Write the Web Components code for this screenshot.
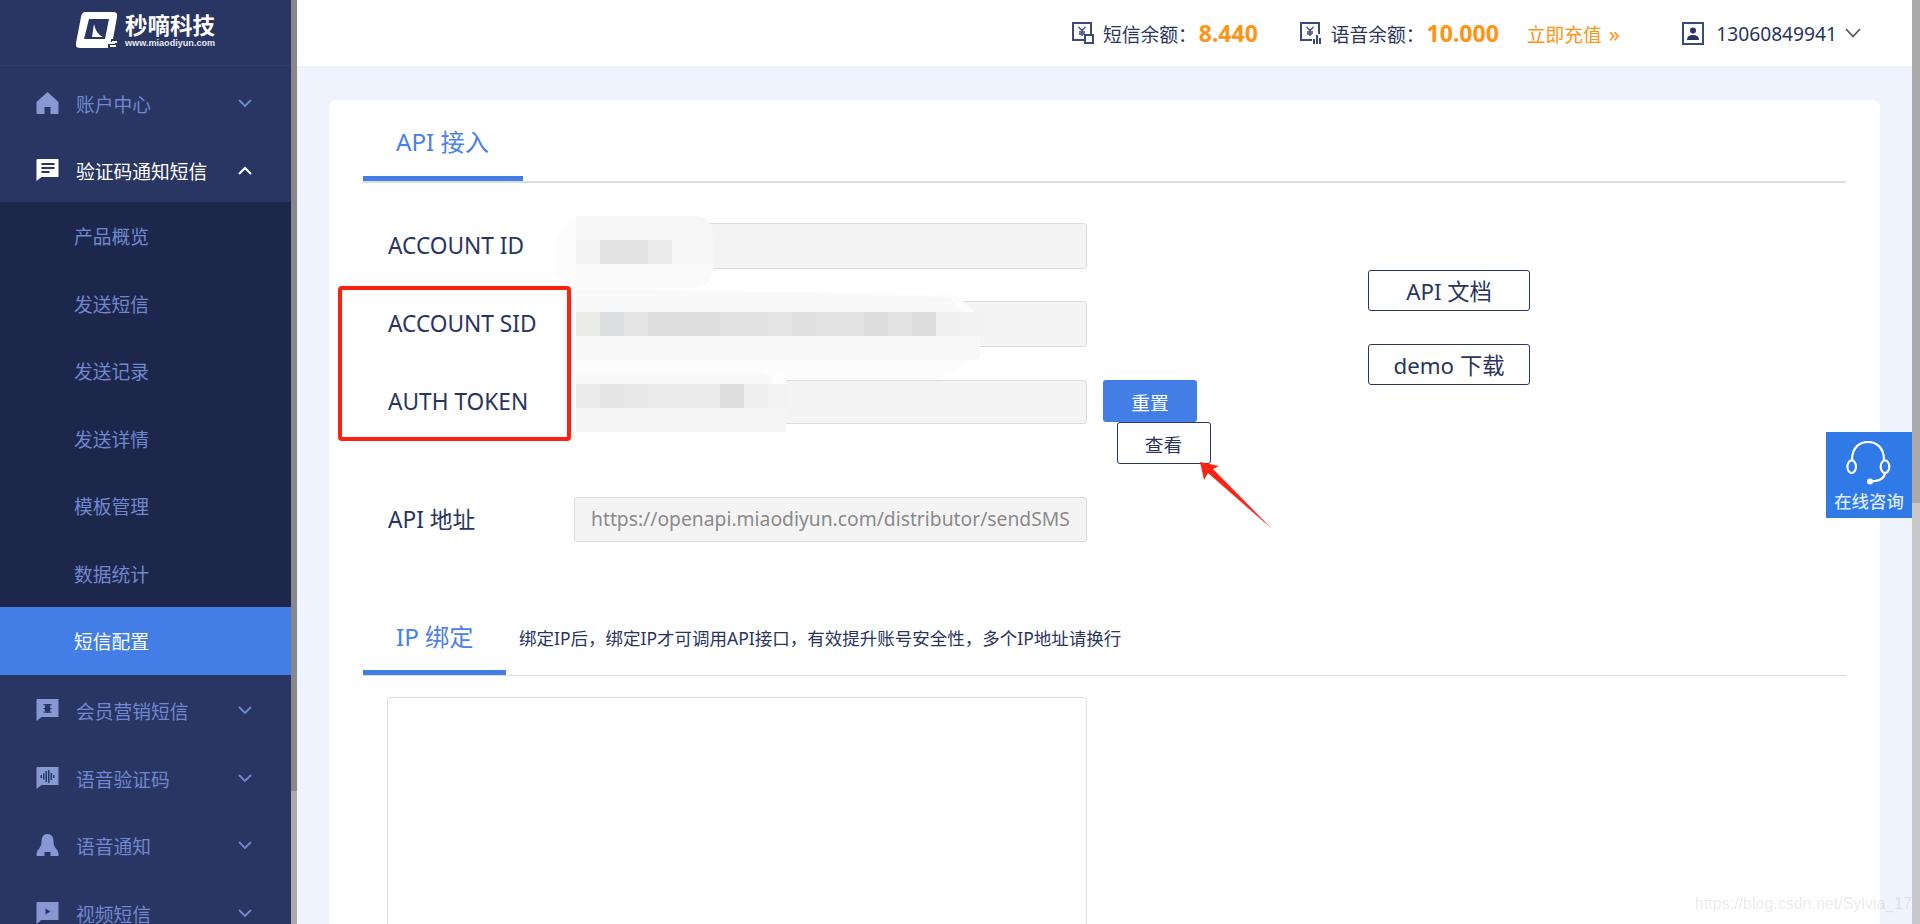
<!DOCTYPE html>
<html lang="zh-CN"><head><meta charset="utf-8"><title>API 接入</title>
<style>
html,body{margin:0;padding:0;height:924px;overflow:hidden;background:#eff3fe}
body{font-family:"Noto Sans","Noto Sans CJK SC",sans-serif;color:#29355f}
</style></head>
<body>
<app-shell>
  <side-bar slot="side">
    <nav-item icon="home" label="账户中心"></nav-item>
    <nav-item icon="chat" label="验证码通知短信" open></nav-item>
    <nav-sub>产品概览</nav-sub><nav-sub>发送短信</nav-sub><nav-sub>发送记录</nav-sub><nav-sub>发送详情</nav-sub><nav-sub>模板管理</nav-sub><nav-sub>数据统计</nav-sub><nav-sub active>短信配置</nav-sub>
    <nav-item icon="bug" label="会员营销短信"></nav-item>
    <nav-item icon="wave" label="语音验证码"></nav-item>
    <nav-item icon="bell" label="语音通知"></nav-item>
    <nav-item icon="play" label="视频短信"></nav-item>
  </side-bar>
  <top-bar slot="top"></top-bar>
  <api-card slot="main"></api-card>
</app-shell>
<redaction-layer></redaction-layer>
<consult-float></consult-float>
<script>
function el(name,html){
  customElements.define(name,class extends HTMLElement{
    constructor(){super();this.attachShadow({mode:'open'}).innerHTML=typeof html==='function'?html(this):html;}
  });
}
el('app-shell',`<style>
:host{display:grid;grid-template-columns:297px 1fr 8px;grid-template-rows:66px 1fr;width:1920px;height:924px;overflow:hidden}
.side{grid-row:1/3;grid-column:1;min-height:0}
.top{grid-column:2;grid-row:1}
.main{grid-column:2;grid-row:2;padding:34px 32px 0;min-height:0;overflow:hidden;background:#eff3fe}
.sb{grid-column:3;grid-row:1/3;display:grid;grid-template-rows:503px 1fr}
.sb i{display:block;background:#aaaaaa}.sb i+i{background:#c8c8c8}
</style>
<div class="side"><slot name="side"></slot></div>
<div class="top"><slot name="top"></slot></div>
<div class="main"><slot name="main"></slot></div>
<div class="sb"><i></i><i></i></div>`);

const logo=`<svg width="42" height="38" viewBox="0 0 42 38" aria-hidden="true">
<path fill="#fff" d="M9 0H37Q42 0 41 5L37 27H35V30H39V32H32V36H4Q-1 36 0 31L5 5Q6 0 9 0Z"/>
<path fill="#293663" d="M13 7H33L29 27H8Z"/>
<path fill="#fff" d="M18 12L16 25H27Q20 22 18 12Z"/>
<rect x="34" y="33" width="6" height="2" fill="#fff"/><rect x="33" y="29.500" width="2" height="2" fill="#fff"/><rect x="36" y="29" width="5" height="2" fill="#fff"/></svg>`;
el('side-bar',`<style>
:host{display:grid;grid-template-columns:291px 6px;height:924px;overflow:hidden;background:#293663}
.col{display:flex;flex-direction:column;overflow:hidden;height:924px}
.brand{flex:0 0 66px;box-sizing:border-box;border-bottom:1px solid #2f3f76;display:flex;align-items:flex-start;padding:12px 0 0 76px;gap:7px}
.name{display:flex;flex-direction:column;color:#fff}
b{font:700 22.500px/24px "Noto Sans CJK SC",sans-serif;letter-spacing:0}
small{font:700 9.100px/12px "Liberation Sans",sans-serif;color:#e6e8f0;margin-top:1px;white-space:nowrap}
.list{padding-top:1px}
.thumb{display:grid;grid-template-rows:791px 1fr}.thumb i{background:#888}.thumb i+i{background:#aaa}
</style>
<div class="col"><div class="brand">${logo}<div class="name"><b>秒嘀科技</b><small>www.miaodiyun.com</small></div></div><div class="list"><slot></slot></div></div>
<div class="thumb"><i></i><i></i></div>`);

const BG='#293663';
const bub='M1 0H22a0 0 0 0 1 0 0V18H5L0 22V1Q0 0 1 0Z';
const ICONS={
 home:`<path d="M11 0L22 10V21a1 1 0 0 1-1 1H14V15H8V22H1a1 1 0 0 1-1-1V10Z"/>`,
 chat:`<path d="${bub}"/><g fill="${BG}"><rect x="5" y="4" width="13" height="2"/><rect x="5" y="8" width="13" height="2"/><rect x="5" y="12" width="8" height="2"/></g>`,
 bug:`<path d="${bub}"/><g fill="${BG}"><ellipse cx="11" cy="9.500" rx="2.800" ry="4.200"/><rect x="7" y="5" width="8" height="1.200"/><rect x="7" y="9" width="8" height="1.200"/><rect x="7" y="12.500" width="8" height="1.200"/></g>`,
 wave:`<path d="${bub}"/><g fill="${BG}"><rect x="4" y="8" width="1.500" height="3"/><rect x="6.500" y="6.500" width="1.500" height="6"/><rect x="9" y="4" width="1.500" height="11"/><rect x="11.500" y="3" width="1.500" height="13"/><rect x="14" y="6" width="1.500" height="7"/><rect x="16.500" y="8" width="1.500" height="3"/></g>`,
 bell:`<path d="M11 0C6 0 5 4 5 8C5 12 3 14 1 16.500Q0 18 0 22H8V18H14V22H22Q22 18 21 16.500C19 14 17 12 17 8C17 4 16 0 11 0Z"/>`,
 play:`<path d="${bub}"/><path fill="${BG}" d="M9 6.500L14 9.500L9 12.500Z"/>`
};
el('nav-item',h=>{const o=h.hasAttribute('open');return `<style>
:host{display:flex;align-items:center;height:67.5px;box-sizing:border-box;padding:5px 39px 0 36px;color:${o?'#fff':'#7088cf'};font-size:18.750px;white-space:nowrap}
svg.i{width:23px;height:22px;flex:none;margin-right:17px;color:${o?'#fff':'#8898d2'};margin-top:-1px}
span{flex:1}
svg.c{width:14px;height:9px;flex:none}
</style><svg class="i" viewBox="0 0 22 22" fill="currentColor" aria-hidden="true">${ICONS[h.getAttribute('icon')]}</svg><span>${h.getAttribute('label')}</span>
<svg class="c" viewBox="0 0 14 9" fill="none" stroke="currentColor" stroke-width="${o?2:1.800}" aria-hidden="true"><path d="${o?'M1 8L7 2L13 8':'M1 1L7 7L13 1'}"/></svg>`});
el('nav-sub',h=>{const a=h.hasAttribute('active');return `<style>
:host{display:flex;align-items:center;height:67.5px;box-sizing:border-box;padding-left:74px;background:${a?'#427ee6':'#1d274b'};color:${a?'#fff':'#7088cf'};font-size:18.750px}
</style><slot></slot>`});

const frame=`<rect x="1" y="1" width="18" height="17" fill="none" stroke="#3b4a7c" stroke-width="2"/><path d="M6.500 5L10 8.500L13.500 5M10 8.500V14M7 10H13M7 12H13" fill="none" stroke="#3b4a7c" stroke-width="1.300"/>`;
const statIcon={
 sms:`<svg width="22" height="22" viewBox="0 0 22 22" aria-hidden="true">${frame}<rect x="13" y="13" width="8" height="8" fill="#fff" stroke="#3b4a7c" stroke-width="2"/></svg>`,
 voice:`<svg width="22" height="22" viewBox="0 0 22 22" aria-hidden="true">${frame}<rect x="12" y="12" width="10" height="10" fill="#fff"/><path d="M14 22V17M17 22V13M20 22V16" stroke="#3b4a7c" stroke-width="2"/></svg>`
};
el('balance-stat',h=>`<style>
:host{display:flex;align-items:center;white-space:nowrap}
svg{flex:none;margin-right:9px}
.l{font-size:18.750px;color:#29355f}
.v{font:700 23px/1 "Noto Sans",sans-serif;color:#ff9314;margin-left:2px}
</style>${statIcon[h.getAttribute('kind')]}<span class="l">${h.getAttribute('label')}：</span><span class="v">${h.getAttribute('value')}</span>`);
el('top-bar',`<style>
:host{display:flex;align-items:center;height:66px;background:#fff;padding-left:775px;box-sizing:border-box;white-space:nowrap}
.a{margin-left:28px;color:#ff9314;font-size:18.750px;word-spacing:2px}
.a em{font-style:normal;font-size:22px;line-height:1}
.u{display:flex;align-items:center;margin-left:auto;padding-right:51px;color:#29355f;font-size:19.200px}
.u svg:first-child{margin-right:12px}.u svg:last-child{margin-left:8px}
balance-stat+balance-stat{margin-left:42px}
</style>
<balance-stat kind="sms" label="短信余额" value="8.440"></balance-stat>
<balance-stat kind="voice" label="语音余额" value="10.000"></balance-stat>
<span class="a">立即充值 <em>»</em></span>
<div class="u"><svg width="22" height="23" viewBox="0 0 22 23" aria-hidden="true"><rect x="1" y="1" width="20" height="21" fill="#fff" stroke="#3b4a7c" stroke-width="2"/><circle cx="11" cy="8.500" r="3" fill="#29355f"/><path d="M5 18Q5 13 11 13Q17 13 17 18Z" fill="#29355f"/></svg>13060849941<svg width="16" height="10" viewBox="0 0 16 10" fill="none" stroke="#555" stroke-width="1.800" aria-hidden="true"><path d="M1 1L8 8.500L15 1"/></svg></div>`);

el('tab-head',`<style>
:host{display:flex;align-items:flex-start;box-sizing:border-box;border-bottom:var(--line,2px) solid #dddddd}
.t{box-sizing:border-box;border-bottom:5px solid #427ee6;color:#4a80e8;font-size:24.200px;line-height:var(--lh);height:var(--h);width:var(--w);padding-left:33px;white-space:nowrap}
.s{flex:1}
</style><div class="t"><slot></slot></div><div class="s"><slot name="hint"></slot></div>`);

el('form-row',`<style>
:host{display:grid;grid-template-columns:211px 513px auto;grid-template-rows:var(--h,46px);height:var(--h,46px);margin-top:var(--gap,0)}
.l{padding:0 0 2px 25px;font-size:22.700px;white-space:nowrap;color:#29355f;align-self:center}
.f{box-sizing:border-box;height:var(--h,46px);background:#f4f4f4;border:1px solid #dcdcdc;border-radius:3px;padding:0 12px 0 16px;font-size:19.300px;line-height:calc(var(--h,46px) - 3px);color:#8a8a8a;white-space:nowrap;overflow:hidden}
.x{align-self:start;padding-left:16px}
</style><div class="l"><slot name="label"></slot></div><div class="f"><slot></slot></div><div class="x"><slot name="extra"></slot></div>`);

el('outline-btn',h=>{const p=h.hasAttribute('primary');return `<style>
:host{display:inline-flex;align-items:center;justify-content:center;box-sizing:border-box;width:var(--w,94px);height:var(--bh,42px);border-radius:3px;font-size:var(--fs,18.700px);white-space:nowrap;
${p?'background:#427ee6;color:#fff;':'background:#fff;color:#29355f;border:1px solid #29355f;'}}
</style><slot></slot>`});

el('api-card',`<style>
:host{display:block;box-sizing:border-box;width:1551px;height:900px;background:#fff;border-radius:7px 7px 0 0;padding:0 34px}
.first{--lh:84px;--h:81px;--w:160px;--line:2px;height:83px}
.grid{display:flex;align-items:flex-start}
.left{flex:0 0 1005px;padding-top:40px}
.docs{display:flex;flex-direction:column;gap:33px;padding-top:87px;--w:162px;--bh:41px;--fs:22.300px}
.acts{display:flex;flex-direction:column;align-items:flex-start}
.acts outline-btn+outline-btn{margin-left:13.500px}
.second{--lh:74px;--h:75px;--w:143px;--line:1px;margin-top:58px;height:76px}
.hint{display:block;font-size:17.500px;line-height:76px;margin-left:13px;color:#29355f;white-space:nowrap}
.area{box-sizing:border-box;margin:21px 0 0 24px;width:700px;height:400px;border:1px solid #dddddd;border-radius:3px;background:#fff}
</style>
<tab-head class="first">API 接入</tab-head>
<div class="grid"><div class="left">
<form-row><span slot="label">ACCOUNT ID</span></form-row>
<form-row style="--gap:32px"><span slot="label">ACCOUNT SID</span></form-row>
<form-row style="--gap:33px;--h:44px"><span slot="label">AUTH TOKEN</span>
 <div slot="extra" class="acts"><outline-btn primary>重置</outline-btn><outline-btn>查看</outline-btn></div></form-row>
<form-row style="--gap:73px;--h:45px"><span slot="label">API 地址</span>https://openapi.miaodiyun.com/distributor/sendSMS</form-row>
</div><div class="docs"><outline-btn>API 文档</outline-btn><outline-btn>demo 下载</outline-btn></div></div>
<tab-head class="second">IP 绑定<span slot="hint" class="hint">绑定IP后，绑定IP才可调用API接口，有效提升账号安全性，多个IP地址请换行</span></tab-head>
<div class="area"></div>`);

function box(l,t,w,h,bg,extra=''){return `<i style="left:${l}px;top:${t}px;width:${w}px;height:${h}px;background:${bg};${extra}"></i>`}
function cells(t,list,l=576){let s='';let x=l;for(const [c,n] of list){s+=box(x,t,24*n,24,c);x+=24*n}return s}
el('redaction-layer',`<style>
:host{position:absolute;left:0;top:0;width:1920px;height:924px;pointer-events:none;overflow:hidden}
i{position:absolute;display:block}
.red{position:absolute;left:338px;top:286px;width:233px;height:155px;box-sizing:border-box;border:4px solid #ff2012;border-radius:4px}
svg{position:absolute;left:0;top:0}
.wm{position:absolute;left:1695px;top:894px;font:16px/20px "Liberation Sans",sans-serif;color:rgba(130,130,130,.16);white-space:nowrap;filter:blur(.4px)}
</style>
${box(555,216,158,73,'#fcfcfc','border-radius:34px 24px 34px 24px')}
${box(576,216,137,24,'#f6f6f6','border-top-right-radius:18px')}
${cells(240,[['#f3f3f3',1],['#e3e3e3',2],['#ececec',1]])}
${box(672,240,41,24,'#f6f6f6')}
${box(576,264,137,24,'#fafafa','border-bottom-right-radius:18px')}
${box(571,288,409,91,'#fcfcfc','border-radius:14px 40px 44px 14px;clip-path:polygon(0 0,60% 4%,94% 8%,100% 30%,100% 75%,90% 100%,0 100%)')}
${box(576,288,385,24,'#f9f9f9','clip-path:polygon(0 5%,60% 20%,97% 40%,100% 100%,0 100%)')}
${cells(312,[['#ecece9',1],['#dddfe1',1],['#e4e4e4',1],['#dfdfdf',3],['#e0e1e0',2],['#e3e4e3',1],['#e0e0e0',1],['#e3e3e3',2],['#dcdcdc',1],['#e3e3e3',1],['#dddddd',1],['#f0f0f0',1],['#f2f2f2',1]])}
${box(576,336,404,24,'#f8f8f8','border-bottom-right-radius:6px')}
${box(571,372,215,60,'#fdfdfd')}
${box(576,372,196,12,'#f9f9f9','border-top-right-radius:12px 10px')}
${cells(384,[['#ebebeb',1],['#e4e4e4',1],['#e8e8e8',1],['#ebebeb',3],['#dfdfdf',1],['#eeeeee',1]])}
${box(768,384,18,24,'#f3f3f3')}
${box(576,408,210,24,'#f5f5f5')}
<div class="red"></div>
<svg width="1920" height="924" aria-hidden="true"><polygon fill="#ff2416" points="1200,462 1219,466 1213,469 1272,529 1208,473 1204,480"/></svg>
<div class="wm">https://blog.csdn.net/Sylvia_17</div>`);

el('consult-float',`<style>
:host{position:fixed;left:1826px;top:432px;width:86px;height:86px;background:#307ae8;display:flex;flex-direction:column;align-items:center;color:#dfeafb}
svg{display:block;flex:none}
span{font-size:17.400px;line-height:22px;font-weight:500;white-space:nowrap}
</style><svg width="86" height="58" viewBox="0 0 86 58" fill="none" stroke="#fff" stroke-width="2.200" aria-hidden="true">
<path d="M26 28C26 15 34 10 42 10C50 10 58 15 58 28"/><ellipse cx="25.700" cy="34.700" rx="4.300" ry="6.300"/><ellipse cx="59" cy="34.700" rx="4.300" ry="6.300"/><path d="M59 41C58 48 51 49 44 49.500"/><circle cx="44" cy="49.500" r="3" fill="#fff" stroke="none"/></svg><span>在线咨询</span>`);
</script>
</body></html>
